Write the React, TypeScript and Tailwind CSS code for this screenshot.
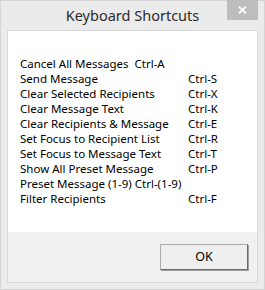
const shortcuts: { label: string; keys?: string; inline?: boolean }[] = [
  { label: 'Cancel All Messages  Ctrl-A', inline: true },
  { label: 'Send Message', keys: 'Ctrl-S' },
  { label: 'Clear Selected Recipients', keys: 'Ctrl-X' },
  { label: 'Clear Message Text', keys: 'Ctrl-K' },
  { label: 'Clear Recipients & Message', keys: 'Ctrl-E' },
  { label: 'Set Focus to Recipient List', keys: 'Ctrl-R' },
  { label: 'Set Focus to Message Text', keys: 'Ctrl-T' },
  { label: 'Show All Preset Message', keys: 'Ctrl-P' },
  { label: 'Preset Message (1-9) Ctrl-(1-9)', inline: true },
  { label: 'Filter Recipients', keys: 'Ctrl-F' },
];

export default function App() {
  return (
    <div
      className="flex h-[290px] w-[265px] flex-col border border-[#d4d4d4] bg-[#ebebeb] text-black"
      style={{ fontFamily: '"Noto Sans", "Open Sans", sans-serif' }}
    >
      <div className="relative flex h-[29px] shrink-0 items-center justify-center">
        <span className="text-[14.5px] text-[#2b2b2b]">Keyboard Shortcuts</span>
        <button className="absolute right-[6px] top-[-1px] flex h-[20px] w-[31px] items-center justify-center bg-[#bdbdbd]">
          <svg width="9" height="8" viewBox="0 0 9 8">
            <path d="M1 0.5 L8 7.5 M8 0.5 L1 7.5" stroke="#fff" strokeWidth="1.8" />
          </svg>
        </button>
      </div>

      <div className="mx-[6px] mb-[6px] flex flex-1 flex-col border border-[#d9d9d9]">
        <div className="flex-1 bg-white pl-[12px] pt-[25px]">
          <div className="grid grid-cols-[168px_auto] text-[11.5px] leading-[15px]">
            {shortcuts.map((s) =>
              s.inline ? (
                <div key={s.label} className="col-span-2 whitespace-pre">
                  {s.label}
                </div>
              ) : (
                <div key={s.label} className="contents">
                  <span className="whitespace-nowrap">{s.label}</span>
                  <span>{s.keys}</span>
                </div>
              ),
            )}
          </div>
        </div>
        <div className="flex h-[50px] shrink-0 items-center justify-end bg-[#f0f0f0] pr-[9px]">
          <button className="h-[26px] w-[88px] border border-t-[#adadad] border-l-[#adadad] border-r-[#6a6a6a] border-b-[#6a6a6a] bg-[#efefef] text-[12.5px] shadow-[1px_1px_0_#a0a0a0]">
            OK
          </button>
        </div>
      </div>
    </div>
  );
}
